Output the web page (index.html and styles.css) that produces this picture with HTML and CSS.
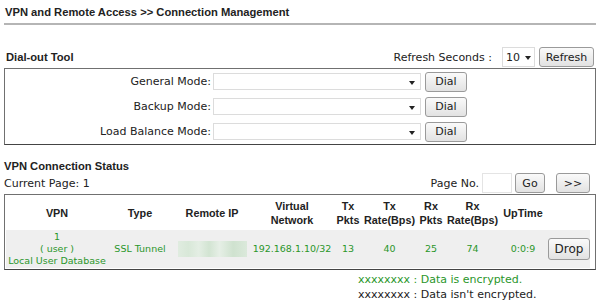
FILE: index.html
```html
<!DOCTYPE html>
<html lang="en">
<head>
  <meta charset="UTF-8" />
  <title>Connection Management</title>
  <link rel="stylesheet" href="styles.css">
</head>
<body>

  <div class="page-title">VPN and Remote Access &gt;&gt; Connection Management</div>

  <div class="section-head dial-head">
    <span class="section-title">Dial-out Tool</span>
    <div class="tools">
      <span class="txt">Refresh Seconds :</span>
      <div class="select small">10<span class="arrow"></span></div>
      <button class="btn refresh">Refresh</button>
    </div>
  </div>

  <div class="box dial-box">
    <div class="dial-row">
      <label>General Mode:</label>
      <div class="select wide"><span class="arrow"></span></div>
      <button class="btn dial">Dial</button>
    </div>
    <div class="dial-row">
      <label>Backup Mode:</label>
      <div class="select wide"><span class="arrow"></span></div>
      <button class="btn dial">Dial</button>
    </div>
    <div class="dial-row">
      <label>Load Balance Mode:</label>
      <div class="select wide"><span class="arrow"></span></div>
      <button class="btn dial">Dial</button>
    </div>
  </div>

  <div class="section-title status-title">VPN Connection Status</div>
  <div class="section-head page-head">
    <span class="txt">Current Page: 1</span>
    <div class="tools">
      <span class="txt">Page No.</span>
      <div class="page-input"></div>
      <button class="btn go">Go</button>
      <button class="btn next">&gt;&gt;</button>
    </div>
  </div>

  <div class="box status-box">
    <table class="status">
      <colgroup>
        <col class="c-vpn">
        <col class="c-type">
        <col class="c-ip">
        <col class="c-net">
        <col class="c-pkts">
        <col class="c-rate">
        <col class="c-pkts">
        <col class="c-rate">
        <col class="c-up">
        <col class="c-drop">
      </colgroup>
      <tr class="head">
        <th>VPN</th>
        <th>Type</th>
        <th>Remote IP</th>
        <th>Virtual<br>Network</th>
        <th>Tx<br>Pkts</th>
        <th>Tx<br>Rate(Bps)</th>
        <th>Rx<br>Pkts</th>
        <th>Rx<br>Rate(Bps)</th>
        <th>UpTime</th>
        <th></th>
      </tr>
      <tr class="data">
        <td>1<br>( user )<br>Local User Database</td>
        <td>SSL Tunnel</td>
        <td><span class="blur"></span></td>
        <td>192.168.1.10/32</td>
        <td>13</td>
        <td>40</td>
        <td>25</td>
        <td>74</td>
        <td>0:0:9</td>
        <td><button class="btn drop">Drop</button></td>
      </tr>
    </table>
  </div>

  <div class="legend">
    <div class="enc">xxxxxxxx : Data is encrypted.</div>
    <div>xxxxxxxx : Data isn't encrypted.</div>
  </div>

</body>
</html>
```

FILE: styles.css
```css
body {
  margin: 0;
  padding: 0 4px;
  background: #fff;
  font-family: "DejaVu Sans", Verdana, sans-serif;
  font-size: 11px;
  color: #222;
}

.page-title {
  font-family: "Liberation Sans", Arial, sans-serif;
  font-weight: bold;
  font-size: 11.2px;
  padding: 6px 1px 0;
  height: 17px;
  border-bottom: 2px solid #b5b5b5;
}

.section-title {
  font-family: "Liberation Sans", Arial, sans-serif;
  font-weight: bold;
  font-size: 11.2px;
}

.section-head {
  display: flex;
  justify-content: space-between;
  align-items: center;
}

.dial-head {
  margin-top: 21px;
  height: 22px;
  padding-left: 2px;
}

.tools {
  display: flex;
  align-items: center;
  gap: 4px;
}

.box {
  border: 1px solid #707070;
  border-bottom-color: #444;
}

.dial-row {
  display: flex;
  align-items: center;
  height: 25px;
}

.dial-row label {
  width: 206px;
  text-align: right;
  padding-right: 2px;
}

.select {
  position: relative;
  height: 17px;
  line-height: 17px;
  border: 1px solid #dcdcdc;
  background: #fff;
  padding-left: 5px;
  box-sizing: border-box;
}

.select.wide {
  width: 208px;
}

.select.small {
  width: 33px;
  height: 20px;
  line-height: 19px;
  margin-left: 6px;
  padding-left: 3px;
}

.select.small .arrow {
  right: 3px;
  top: 8px;
}

.arrow {
  position: absolute;
  right: 5px;
  top: 7px;
  border-left: 3px solid transparent;
  border-right: 3px solid transparent;
  border-top: 4px solid #222;
}

.btn {
  font-family: "DejaVu Sans", Verdana, sans-serif;
  font-size: 11px;
  color: #222;
  height: 20px;
  padding: 0 8px;
  border: 1px solid #9a9a9a;
  border-radius: 3px;
  background: linear-gradient(#fafafa, #e2e2e2);
}

.btn.refresh {
  width: 55px;
  padding: 0;
  margin-right: 2px;
}

.btn.dial {
  width: 42px;
  padding: 0;
  margin-left: 4px;
}

.status-title {
  margin-top: 15px;
}

.page-head {
  height: 20px;
  margin-top: 1px;
}

.page-head .tools {
  gap: 3px;
}

.page-input {
  width: 28px;
  height: 18px;
  border: 1px solid #e4e4e4;
}

.btn.go {
  width: 30px;
  padding: 0;
}

.btn.next {
  width: 34px;
  padding: 0;
  margin-left: 8px;
  margin-right: 6px;
}

.status-box {
  margin-top: 1px;
  padding: 1px;
}

.status {
  border-collapse: collapse;
  table-layout: fixed;
  width: 584px;
}

.c-vpn { width: 102px; }
.c-type { width: 64px; }
.c-ip { width: 80px; }
.c-net { width: 80px; }
.c-pkts { width: 32px; }
.c-rate { width: 51px; }
.c-up { width: 50px; }
.c-drop { width: 42px; }

.status th {
  font-family: "Liberation Sans", Arial, sans-serif;
  font-weight: bold;
  font-size: 10.8px;
  height: 34px;
  padding: 0;
  text-align: center;
  line-height: 14px;
  color: #222;
  white-space: nowrap;
}

.status td {
  background: #efefef;
  color: #2a962a;
  font-size: 9.5px;
  text-align: center;
  padding: 0;
  height: 38px;
  line-height: 12px;
  white-space: nowrap;
}

.blur {
  display: inline-block;
  width: 69px;
  height: 16px;
  vertical-align: middle;
  background: linear-gradient(90deg, #e0ece0 0, #d8e8d8 15%, #e4eee4 30%, #d2e4d2 45%, #e6efe6 60%, #cfe2cf 80%, #dbe9db 100%);
}

.btn.drop {
  width: 42px;
  height: 22px;
  padding: 0;
  font-size: 12px;
}

.legend {
  padding-left: 354px;
  margin-top: 2px;
  line-height: 15px;
}

.legend .enc {
  color: #2a962a;
}
```
